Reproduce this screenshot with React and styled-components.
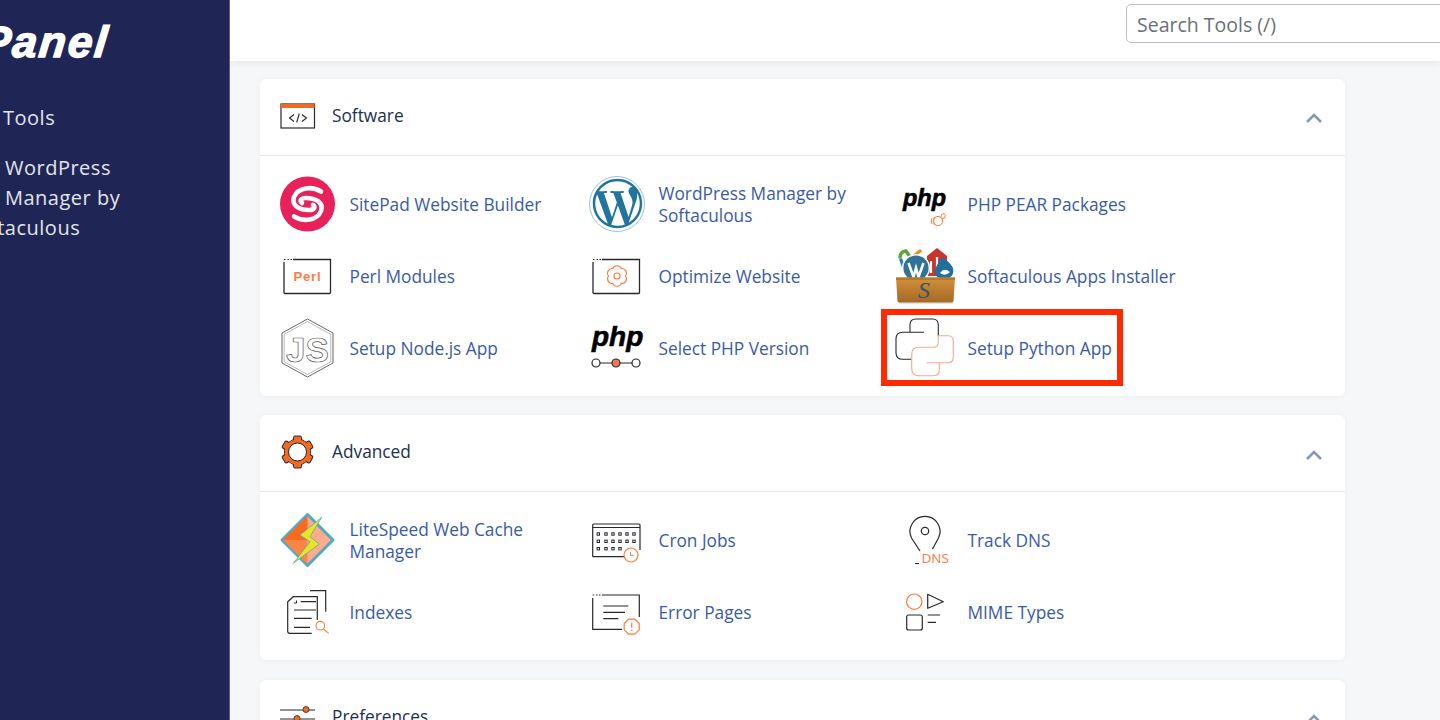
import React from "react";
import styled, { createGlobalStyle } from "styled-components";
import { FaWordpressSimple } from "react-icons/fa";

const GlobalStyle = createGlobalStyle`
  html, body {
    margin: 0;
    padding: 0;
    height: 720px;
    overflow: hidden;
    background: #f6f7f8;
    font-family: "Open Sans", "Liberation Sans", sans-serif;
  }
`;

const Page = styled.div`
  display: grid;
  grid-template-columns: 230px 1fr;
  width: 1440px;
  height: 720px;
  overflow: hidden;
`;

const Sidebar = styled.aside`
  background: #1f2655;
  border-right: 1px solid #59608a;
  box-sizing: border-box;
  overflow: hidden;
  padding-top: 12px;
`;

const Logo = styled.div`
  color: #ffffff;
  font-family: "Liberation Sans", sans-serif;
  font-weight: 700;
  font-style: italic;
  font-size: 44px;
  line-height: 60px;
  letter-spacing: 2px;
  margin-left: -20px;
  margin-bottom: 31px;
  -webkit-text-stroke: 1.4px #ffffff;
  transform: skewX(-6deg);
  transform-origin: left 75%;
`;

const SideItem = styled.div`
  width: 190px;
  margin-left: -34px;
  margin-bottom: 20px;
  color: #e3e5ec;
  font-size: 20px;
  line-height: 30px;
  letter-spacing: 0.5px;
`;

const SideIcon = styled.span`
  float: left;
  width: ${(p) => p.$width}px;
  height: ${(p) => p.$lines * 30}px;
`;

const Main = styled.main`
  min-width: 0;
  overflow: hidden;
`;

const TopBar = styled.header`
  display: flex;
  justify-content: flex-end;
  align-items: flex-start;
  height: 61px;
  box-sizing: border-box;
  padding-top: 4px;
  background: #ffffff;
  box-shadow: 0 2px 8px rgba(30, 40, 60, 0.08);
  overflow: hidden;
`;

const Search = styled.input`
  width: 330px;
  height: 39px;
  box-sizing: border-box;
  margin-right: -16px;
  padding: 1px 10px 0;
  border: 1px solid #b9bcd2;
  border-radius: 5px;
  background: #ffffff;
  font-family: inherit;
  font-size: 19.5px;
  outline: none;
  &::placeholder {
    color: #6b7076;
    opacity: 1;
  }
`;

const Content = styled.div`
  display: flex;
  flex-direction: column;
  gap: 19.5px;
  width: 1085px;
  margin-left: 30px;
  padding-top: 17.5px;
`;

const Card = styled.section`
  background: #ffffff;
  border-radius: 6px;
  box-shadow: 0 0 6px rgba(30, 40, 60, 0.04);
`;

const CardHead = styled.div`
  display: flex;
  align-items: center;
  gap: 16px;
  height: 77px;
  box-sizing: border-box;
  padding: 0 22px 4px 20px;
  border-bottom: 1px solid #e3e8f0;
`;

const CardTitle = styled.h2`
  flex: 1;
  margin: 1px 0 0;
  color: #1d2f4f;
  font-size: 17.3px;
  font-weight: 400;
`;

const ToolGrid = styled.div`
  display: grid;
  grid-template-columns: repeat(3, 309px);
  grid-auto-rows: 72px;
  padding: 12px 20px;
`;

const Tool = styled.a`
  position: relative;
  display: flex;
  align-items: center;
  gap: 13.5px;
  color: #3a5ba4;
  font-size: 17.3px;
  line-height: 22px;
`;

const ToolLabel = styled.span`
  width: 225px;
  margin-top: 2px;
`;

const Highlight = styled.span`
  position: absolute;
  left: -17px;
  top: -3px;
  width: 242px;
  height: 77px;
  box-sizing: border-box;
  border: 6px solid #ff2a00;
`;

const IconSvg = styled.svg`
  flex: none;
  width: 56px;
  height: 56px;
  overflow: visible;
`;

const HeadSvg = styled.svg`
  flex: none;
  width: 36px;
  height: 26px;
  margin-top: 2px;
  overflow: visible;
`;

const ChevronSvg = styled.svg`
  flex: none;
  width: 18px;
  height: 12px;
  margin-top: 7px;
`;

const WpBadge = styled.span`
  flex: none;
  display: flex;
  align-items: center;
  justify-content: center;
  width: 56px;
  height: 56px;
  box-sizing: border-box;
  border: 1.5px solid #9cc3d6;
  border-radius: 50%;
  color: #21759b;
  font-size: 51px;
`;

const ORANGE = "#ff7a3d";
const INK = "#26282c";

const Box = ({ children }) => (
  <IconSvg viewBox="0 0 56 56" fill="none">
    {children}
  </IconSvg>
);

const PhpText = ({ x, y, size }) => (
  <text x={x} y={y} fontFamily="Liberation Sans" fontWeight="700" fontStyle="italic" fontSize={size} fill="#000" stroke="#000" strokeWidth="0.6">
    php
  </text>
);

const WindowFrame = () => (
  <>
    <path d="M13 11.5 H50.5 V44.5 Q50.5 45.5 49.5 45.5 H5 Q4 45.5 4 44.5 V14" stroke={INK} strokeWidth="1.3" />
    <path d="M4 11.5 H5.5 M7.5 11.5 H9 M10.5 11.5 H12" stroke={INK} strokeWidth="1" />
  </>
);

const SitePadIcon = () => (
  <Box>
    <circle cx="27.5" cy="28" r="27.5" fill="#e8215a" />
    <path d="M41 15.5 C32 10 18 11 14 21 C11 30 20 34 29 34 C34 34 36 31 33 29" stroke="#fff" strokeWidth="4.6" strokeLinecap="round" />
    <path d="M14 40.5 C23 46 37 45 41 35 C44 26 35 22 26 22 C21 22 19 25 22 27" stroke="#fff" strokeWidth="4.6" strokeLinecap="round" />
  </Box>
);

const WordPressIcon = () => (
  <WpBadge>
    <FaWordpressSimple />
  </WpBadge>
);

const PearIcon = () => (
  <Box>
    <PhpText x="5" y="30" size="23.5" />
    <g stroke={ORANGE} strokeWidth="1">
      <circle cx="40" cy="45" r="4.6" />
      <path d="M43 41.5 Q42.5 37.5 46 37.5 Q48.5 39 46.5 42 L44 42.5" />
      <path d="M34 42 Q32.5 45 34 48 M36.5 41 Q34.5 45 36.5 49" />
    </g>
  </Box>
);

const PerlIcon = () => (
  <Box>
    <WindowFrame />
    <text x="27.5" y="33" textAnchor="middle" fontFamily="Liberation Sans" fontWeight="700" fontSize="13" letterSpacing="0.8" fill={ORANGE}>
      Perl
    </text>
  </Box>
);

const OptimizeIcon = () => (
  <Box>
    <WindowFrame />
    <path d="M36.5 28 A4.6 4.6 0 0 1 32.25 35.4 A4.6 4.6 0 0 1 23.75 35.4 A4.6 4.6 0 0 1 19.5 28 A4.6 4.6 0 0 1 23.75 20.6 A4.6 4.6 0 0 1 32.25 20.6 A4.6 4.6 0 0 1 36.5 28 Z" stroke={ORANGE} strokeWidth="1.1" />
    <circle cx="28" cy="28" r="3" stroke={ORANGE} strokeWidth="1.1" />
  </Box>
);

const AppsIcon = () => (
  <Box>
    <defs>
      <linearGradient id="crate" x1="0" y1="0" x2="0" y2="1">
        <stop offset="0" stopColor="#d2913a" />
        <stop offset="1" stopColor="#a36a26" />
      </linearGradient>
    </defs>
    <path d="M2 9 Q3 3 8 3 L12 9" stroke="#5aa63a" strokeWidth="3.4" strokeLinecap="round" />
    <path d="M12 11 L22 3" stroke="#ee8a2a" strokeWidth="3.4" strokeLinecap="round" />
    <path d="M3 12 L6 20" stroke="#2a7fb8" strokeWidth="3.4" strokeLinecap="round" />
    <path d="M29 8 L39 0 L49 8 V28 H29 Z" fill="#c9342f" />
    <path d="M33 13 V25 M39 9 V25 M45 13 V25" stroke="#fff" strokeWidth="2.2" />
    <path d="M44 9 Q52 14 55 20 Q57 30 46 31 Q35 30 37 21 Q40 15 44 9 Z" fill="#1f6f9f" />
    <path d="M42 25 Q46 19 52 24 Q47 29 42 25 Z" fill="#fff" />
    <circle cx="18" cy="20" r="14" fill="#fff" />
    <circle cx="18" cy="20" r="12.6" fill="#2f7396" />
    <path d="M10.5 15 L15.5 29 L18 20 L20.5 29 L25.5 15" stroke="#fff" strokeWidth="2.6" />
    <path d="M1 36 H55 V56 H1 Z" fill="#c9c9c9" opacity="0.5" />
    <path d="M-2 29.5 H57 L55.5 53 Q55.5 54.5 53 54.5 H2 Q-0.5 54.5 -0.5 53 Z" fill="url(#crate)" />
    <path d="M-2 29.5 H57 V32 H-2 Z" fill="#b87828" />
    <text x="26" y="50" textAnchor="middle" fontFamily="Liberation Serif" fontStyle="italic" fontSize="24" fill="#38526b">
      S
    </text>
  </Box>
);

const NodeIcon = () => (
  <Box>
    <path d="M27.5 -1 L53 13 V43 L27.5 57 L2 43 V13 Z" stroke="#555" strokeWidth="0.9" strokeLinejoin="round" />
    <path d="M27.5 1.5 L50.8 14.3 V41.7 L27.5 54.5 L4.2 41.7 V14.3 Z" stroke="#888" strokeWidth="0.6" strokeLinejoin="round" />
    <text x="6" y="42" fontFamily="Liberation Sans" fontWeight="700" fontSize="35" fill="#fff" stroke="#555" strokeWidth="0.7">
      JS
    </text>
  </Box>
);

const SelectPhpIcon = () => (
  <Box>
    <PhpText x="3" y="26" size="28" />
    <path d="M11 43 H23 M31 43 H43" stroke={INK} strokeWidth="1.2" />
    <circle cx="7" cy="43" r="4" fill="#fff" stroke={INK} strokeWidth="1.2" />
    <circle cx="27" cy="43" r="4" fill="#f4765c" stroke={INK} strokeWidth="1.2" />
    <circle cx="47" cy="43" r="4" fill="#fff" stroke={INK} strokeWidth="1.2" />
  </Box>
);

const PythonIcon = () => (
  <Box>
    <path d="M26 12.3 H12 V5 Q12 -1 18 -1 H34.7 Q40.3 -1 40.3 5 V15.7 M12 12.3 H4.7 Q-2 12.3 -2 19 V32.7 Q-2 39.3 4.7 39.3 H13.7" stroke={INK} strokeWidth="1.1" />
    <path d="M28.7 42.7 H50.3 Q55.3 42.7 55.3 36.7 V21.7 Q55.3 15.7 50.3 15.7 H40.3 V21.7 Q40.3 27.3 35.3 27.3 H20.3 Q13.7 27.3 13.7 35 V48.3 Q13.7 55.7 20.3 55.7 H35.3 Q41.3 55.7 41.3 50 V42.7" stroke="#f9a68c" strokeWidth="1.1" />
  </Box>
);

const LiteSpeedIcon = () => (
  <Box>
    <path d="M27.5 2.5 L53 28 L27.5 53.5 L2 28 Z" fill="#ffab8c" stroke="#4fa9c9" strokeWidth="3" strokeLinejoin="round" />
    <path d="M27.5 3.5 V28 H3 Z" fill="#fb6a1c" />
    <path d="M3 28 L27.5 52.5 V28 Z" fill="#fb8446" />
    <path d="M41.7 5.3 L20 23 L30 29.7 L13.3 51.3 L39.3 32 L30 24.7 Z" fill="#e9e520" stroke="#4fa9c9" strokeWidth="0.8" strokeLinejoin="round" />
  </Box>
);

const CronIcon = () => {
  const xs = [9.3, 17, 24, 31, 38, 45];
  const rows = [
    [22, xs],
    [29.3, xs],
    [36.7, xs.slice(0, 4)],
  ];
  return (
    <Box>
      <path d="M3.7 44.7 V13 Q3.7 12 4.7 12 H50 Q51 12 51 13 V38 M3.7 44.7 H35 M3.7 15.5 H51" stroke={INK} strokeWidth="1.2" />
      {rows.map(([y, cols]) =>
        cols.map((x) => <rect key={`${x}-${y}`} x={x - 1.2} y={y - 1.2} width="2.4" height="2.4" fill="none" stroke={INK} strokeWidth="1" />)
      )}
      <circle cx="42" cy="43" r="7" fill="#fff" stroke={ORANGE} strokeWidth="1.2" />
      <path d="M41.5 40 V43.5 H44.5" stroke={ORANGE} strokeWidth="1" />
    </Box>
  );
};

const DnsIcon = () => (
  <Box>
    <path d="M22 39 L13.5 26 A15 15 0 1 1 40.5 26 L34.5 37" stroke={INK} strokeWidth="1.2" />
    <circle cx="27" cy="19" r="3.7" stroke={INK} strokeWidth="1.2" />
    <path d="M17 51.5 H21" stroke={INK} strokeWidth="1" />
    <text x="23.5" y="50.5" fontFamily="Open Sans" fontSize="13.5" fill={ORANGE}>
      DNS
    </text>
  </Box>
);

const IndexesIcon = () => (
  <Box>
    <path d="M31.7 49.3 H9.7 Q7.7 49.3 7.7 47.3 V17.7 L13.3 12.7 H37.3 V36" stroke={INK} strokeWidth="1.2" />
    <path d="M30 6.7 H45.7 V27.7" stroke={INK} strokeWidth="1.2" />
    <path d="M20.7 17.7 H36 M14 26 H36 M14 34.3 H31.7 M14 43.3 H30" stroke={INK} strokeWidth="1.2" />
    <path d="M14 19 H16.5 V16.5" stroke={INK} strokeWidth="1" />
    <circle cx="40.3" cy="41.7" r="4.3" stroke={ORANGE} strokeWidth="1.1" />
    <path d="M43.5 45 L48.7 49.3" stroke={ORANGE} strokeWidth="1.1" />
  </Box>
);

const ErrorIcon = () => (
  <Box>
    <path d="M13 11 H50.3 V33 M3.7 14 V45.3 H33" stroke={INK} strokeWidth="1.2" />
    <path d="M3.7 11 H5.2 M7 11 H8.5 M10 11 H11.5" stroke={INK} strokeWidth="1" />
    <path d="M14.3 22 H39.3 M14.3 28.3 H36 M14.3 34.7 H29.3" stroke={INK} strokeWidth="1.2" />
    <path d="M39.6 35.2 H45.8 L50.2 39.6 V45.8 L45.8 50.2 H39.6 L35.2 45.8 V39.6 Z" fill="#fff" stroke={ORANGE} strokeWidth="1.2" />
    <path d="M42.7 38.8 V43.8 M42.7 45.6 V47" stroke={ORANGE} strokeWidth="1.2" />
  </Box>
);

const MimeIcon = () => (
  <Box>
    <circle cx="16.3" cy="17.7" r="7.7" stroke={ORANGE} strokeWidth="1.2" />
    <path d="M29.7 10.3 L45.3 17.7 L29.7 24.3 Z" stroke={INK} strokeWidth="1.2" strokeLinejoin="round" />
    <rect x="8.7" y="31" width="15.6" height="15" rx="2" stroke={INK} strokeWidth="1.2" />
    <path d="M29.7 31 H42 M29.7 38.3 H38" stroke={INK} strokeWidth="1.2" />
  </Box>
);

const SoftwareIcon = () => (
  <HeadSvg viewBox="0 0 36 26" fill="none">
    <rect x="1" y="1" width="33.5" height="24" fill="#fff" stroke={INK} strokeWidth="1.2" />
    <rect x="1" y="1" width="33.5" height="4" fill="#f26a21" />
    <path d="M14 11.5 L9.5 15 L14 18.5 M22 11.5 L26.5 15 L22 18.5 M19.3 10.5 L16.7 19.5" stroke={INK} strokeWidth="1.1" />
  </HeadSvg>
);

const AdvancedIcon = () => (
  <HeadSvg viewBox="0 0 36 26" fill="none">
    <g transform="translate(17.5 13)">
      <circle r="13" fill="#f26a21" stroke={INK} strokeWidth="1" />
      {[0, 60, 120, 180, 240, 300].map((deg) => (
        <rect key={deg} x="-4" y="-16" width="8" height="6" rx="1.5" fill="#f26a21" stroke={INK} strokeWidth="1" transform={`rotate(${deg})`} />
      ))}
      <circle r="12.6" fill="#f26a21" />
      <circle r="9" fill="#fff" stroke={INK} strokeWidth="1" />
    </g>
  </HeadSvg>
);

const PreferencesIcon = () => (
  <HeadSvg viewBox="0 0 36 26" fill="none">
    <path d="M0 6 H35 M0 15 H35 M0 24 H35" stroke={INK} strokeWidth="1.2" />
    <circle cx="26" cy="5.5" r="3" fill="#f26a21" stroke={INK} strokeWidth="0.8" />
    <circle cx="17" cy="14.5" r="3" fill="#f26a21" stroke={INK} strokeWidth="0.8" />
    <circle cx="27" cy="24" r="3" fill="#f26a21" stroke={INK} strokeWidth="0.8" />
  </HeadSvg>
);

const Chevron = () => (
  <ChevronSvg viewBox="0 0 18 12" fill="none">
    <path d="M2 10 L9 3 L16 10" stroke="#8b96b6" strokeWidth="2.6" />
  </ChevronSvg>
);

const sections = [
  {
    title: "Software",
    Icon: SoftwareIcon,
    tools: [
      { label: "SitePad Website Builder", Icon: SitePadIcon },
      { label: "WordPress Manager by Softaculous", Icon: WordPressIcon },
      { label: "PHP PEAR Packages", Icon: PearIcon },
      { label: "Perl Modules", Icon: PerlIcon },
      { label: "Optimize Website", Icon: OptimizeIcon },
      { label: "Softaculous Apps Installer", Icon: AppsIcon },
      { label: "Setup Node.js App", Icon: NodeIcon },
      { label: "Select PHP Version", Icon: SelectPhpIcon },
      { label: "Setup Python App", Icon: PythonIcon, marked: true },
    ],
  },
  {
    title: "Advanced",
    Icon: AdvancedIcon,
    tools: [
      { label: "LiteSpeed Web Cache Manager", Icon: LiteSpeedIcon },
      { label: "Cron Jobs", Icon: CronIcon },
      { label: "Track DNS", Icon: DnsIcon },
      { label: "Indexes", Icon: IndexesIcon },
      { label: "Error Pages", Icon: ErrorIcon },
      { label: "MIME Types", Icon: MimeIcon },
    ],
  },
  { title: "Preferences", Icon: PreferencesIcon, tools: [] },
];

export default function App() {
  return (
    <Page>
      <GlobalStyle />
      <Sidebar>
        <Logo>Panel</Logo>
        <SideItem>
          <SideIcon $width={37} $lines={1} />
          Tools
        </SideItem>
        <SideItem>
          <SideIcon $width={39} $lines={2} />
          WordPress Manager by Softaculous
        </SideItem>
      </Sidebar>
      <Main>
        <TopBar>
          <Search placeholder="Search Tools (/)" />
        </TopBar>
        <Content>
          {sections.map((section) => (
            <Card key={section.title}>
              <CardHead>
                <section.Icon />
                <CardTitle>{section.title}</CardTitle>
                <Chevron />
              </CardHead>
              <ToolGrid>
                {section.tools.map((tool) => (
                  <Tool key={tool.label}>
                    <tool.Icon />
                    <ToolLabel>{tool.label}</ToolLabel>
                    {tool.marked && <Highlight />}
                  </Tool>
                ))}
              </ToolGrid>
            </Card>
          ))}
        </Content>
      </Main>
    </Page>
  );
}
